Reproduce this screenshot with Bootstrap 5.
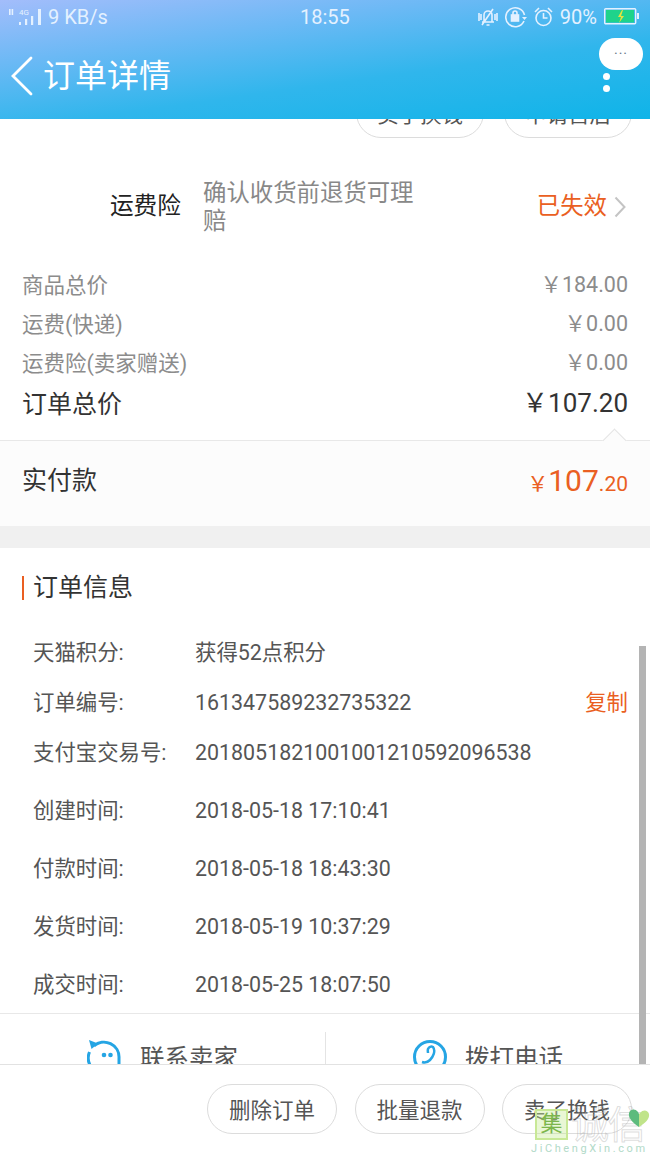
<!DOCTYPE html>
<html lang="zh-CN">

<head>
    <meta charset="UTF-8">
    <meta name="viewport" content="width=device-width, initial-scale=1.0">
    <title>订单详情</title>
    <link href="https://cdn.jsdelivr.net/npm/bootstrap@5.3.0/dist/css/bootstrap.min.css" rel="stylesheet">
    <style>
        html, body { height: 1155px; overflow: hidden; }
        body { font-family: Roboto, "Noto Sans CJK SC", sans-serif; color: #444; background: #fff; }
        .app-shell { height: 1155px; position: relative; overflow: hidden; }
        .top-area { height: 119px; flex: none; background: linear-gradient(172deg, #a3bdfb 0%, #6cb9f5 30%, #30b6ec 62%, #0fb4e8 100%); color: #fff; position: relative; }
        .status-bar { height: 33px; font-size: 20px; color: #e4f1ff; padding: 0 10px 0 8px; }
        .status-left { width: 292px; gap: 6px; }
        .status-clock { width: 100px; }
        .status-right { flex: 1; gap: 7px; }
        .header-title { margin-top: 15px; height: 56px; padding-left: 10px; font-size: 32px; line-height: 56px; gap: 10px; }
        .float-ball { position: absolute; right: 7px; top: 38px; width: 44px; height: 32px; border-radius: 16px; background: #fff; color: #667788; font-size: 14px; line-height: 32px; letter-spacing: 1px; text-align: center; }
        .float-dot { position: absolute; right: 40px; width: 7px; height: 7px; border-radius: 50%; background: #fff; }
        .main-area { flex: 1; overflow: hidden; position: relative; min-height: 0; }
        .clip-btns { height: 19px; overflow: hidden; padding-right: 18px; gap: 20px; }
        .pill-btn { flex: none; width: 130px; height: 50px; border: 1px solid #dcdcdc; border-radius: 25px; background: #fff; color: #555; font-size: 21.5px; line-height: 44px; padding: 4px 0 0; text-align: center; }
        .clip-btns .pill-btn { width: 128px; }
        .ins-row { height: 129px; padding: 9px 24px 0 0; }
        .ins-name { width: 203px; padding-right: 22px; text-align: right; font-size: 23.7px; color: #222; }
        .ins-desc { width: 220px; font-size: 23.4px; line-height: 28px; color: #888; }
        .ins-state { font-size: 23.4px; color: #ea5f22; gap: 7px; }
        .price-rows { padding: 0 22px; }
        .price-row { height: 39px; font-size: 21.5px; color: #8c8c8c; }
        .price-num { margin-top: -3px; }
        .price-total { height: 40px; padding-top: 2px; font-size: 25px; color: #333; }
        .price-total .price-num { font-size: 26px; }
        .paid-box { position: relative; height: 86px; margin-top: 16px; padding: 0 22px 6px; background: #fcfcfc; border-top: 1px solid #e8e8e8; font-size: 25px; color: #333; }
        .paid-box::before { content: ""; position: absolute; right: 27px; top: -9px; width: 17px; height: 17px; background: #fcfcfc; border-top: 1px solid #e4e4e4; border-left: 1px solid #e4e4e4; transform: rotate(45deg); }
        .paid-num { color: #ea5f22; font-size: 21px; }
        .paid-num b { font-size: 30px; font-weight: 400; }
        .gap-band { height: 22px; background: #f0f0f0; }
        .info-title { height: 80px; padding-left: 22px; font-size: 25px; color: #333; }
        .info-title span { display: block; border-left: 2px solid #ea5f22; padding-left: 9px; line-height: 24px; }
        .info-list { height: 385px; padding: 0 22px 0 33px; font-size: 21.4px; color: #555; }
        .info-row { display: flex; align-items: center; height: 50px; }
        .info-row.tall { height: 58.25px; }
        .info-row.first-tall { margin-top: 3.5px; }
        .info-label { width: 162px; flex: none; }
        .info-copy { margin-left: auto; color: #ea5f22; }
        .contact-row { height: 60px; border-top: 1px solid #e8e8e8; padding-top: 18px; }
        .contact-cell { width: 50%; height: 60px; padding-left: 87px; gap: 19px; font-size: 24.5px; color: #555; align-items: flex-start; }
        .contact-cell + .contact-cell { border-left: 1px solid #e4e4e4; gap: 18px; }
        .contact-cell svg { flex: none; margin-top: 8px; }
        .contact-text { line-height: 36px; margin-top: 9px; }
        .bottom-bar { height: 91px; flex: none; border-top: 1px solid #e2e2e2; background: #fff; padding: 19px 18px 0 0; gap: 17.5px; position: relative; }
        .scroll-thumb { position: absolute; right: 4px; top: 527px; width: 7px; height: 418px; background: #b4b4b4; }
        .site-mark { position: absolute; left: 531px; top: 1106px; width: 119px; height: 49px; pointer-events: none; overflow: hidden; }
        .mark-box { position: absolute; left: 4px; top: 3px; width: 33px; height: 31px; background: rgba(200, 235, 150, .4); border: 2px solid #c8e896; color: #7cb64c; font-size: 22px; line-height: 26px; text-align: center; }
        .mark-name { position: absolute; left: 40px; top: 0; color: transparent; -webkit-text-stroke: 1px rgba(170, 170, 170, .4); font-size: 38px; line-height: 38px; letter-spacing: -1px; white-space: nowrap; }
        .mark-heart { position: absolute; left: 97px; top: 2px; }
        .mark-url { position: absolute; left: 0; top: 36px; color: #b2dac8; font-size: 11px; line-height: 14px; letter-spacing: 2.600px; white-space: nowrap; }
    </style>
</head>

<body>
    <div class="app-shell d-flex flex-column">
        <div class="top-area">
            <div class="status-bar d-flex align-items-center">
                <div class="status-left d-flex align-items-center">
                    <svg width="34" height="20" viewBox="0 0 34 20" fill="#e4f1ff">
                        <rect x="1" y="2" width="1.600" height="6"/><rect x="3.600" y="2" width="1.600" height="6"/>
                        <text x="11" y="8" font-size="8" font-family="Roboto">4G</text>
                        <rect x="11" y="15" width="2" height="3"/><rect x="17" y="12" width="2.200" height="6"/><rect x="23" y="9" width="2.200" height="9"/><rect x="30" y="2" width="3" height="16"/>
                    </svg>
                    <span>9 KB/s</span>
                </div>
                <div class="status-clock">18:55</div>
                <div class="status-right d-flex align-items-center justify-content-end">
                    <svg width="20" height="22" viewBox="0 0 20 22" fill="none" stroke="#e4f1ff" stroke-width="1.600">
                        <path d="M6 16V9a4 4 0 0 1 8 0v7zM4 16h12M8.500 19h3M4 19 15 3M1 7v8M19 7v8M3 8v6M17 8v6"/>
                    </svg>
                    <svg width="22" height="22" viewBox="0 0 22 22" fill="none" stroke="#e4f1ff" stroke-width="1.600">
                        <path d="M19 15a9.500 9.500 0 1 1 .5-6"/><path d="M17 11h5l-2.500 3z" fill="#e4f1ff" stroke="none"/><rect x="6.500" y="9" width="7" height="6" fill="#e4f1ff"/><path d="M8 9V7a2 2 0 0 1 4 0v2"/>
                    </svg>
                    <svg width="19" height="22" viewBox="0 0 19 22" fill="none" stroke="#e4f1ff" stroke-width="1.600">
                        <circle cx="9.500" cy="12" r="7.500"/><path d="M9.500 7v5h4M1 6l4-4M18 6l-4-4"/>
                    </svg>
                    <span>90%</span>
                    <svg width="36" height="18" viewBox="0 0 36 18">
                        <rect x=".7" y=".7" width="31" height="15" rx="1" fill="none" stroke="#e4f1ff" stroke-width="1.400"/>
                        <rect x="2" y="2" width="28" height="12.500" fill="#1fd38b"/>
                        <rect x="33" y="5" width="2" height="6" fill="#e4f1ff"/>
                        <path d="M18 2l-4 7h3l-2 6 5-7h-3l2-6z" fill="#e6e23c"/>
                    </svg>
                </div>
            </div>
            <div class="header-title d-flex align-items-center">
                <svg width="23" height="40" viewBox="0 0 23 40" fill="none" stroke="#fff" stroke-width="2.800" stroke-linecap="round">
                    <path d="M21 2 3 20 21 38"/>
                </svg>
                <span>订单详情</span>
            </div>
            <div class="float-ball">···</div>
            <div class="float-dot" style="top: 73px"></div>
            <div class="float-dot" style="top: 85px"></div>
        </div>

        <div class="main-area">
            <div class="clip-btns d-flex justify-content-end align-items-end">
                <button class="pill-btn" type="button">卖了换钱</button>
                <button class="pill-btn" type="button">申请售后</button>
            </div>

            <div class="ins-row d-flex align-items-center">
                <div class="ins-name">运费险</div>
                <div class="ins-desc">确认收货前退货可理赔</div>
                <div class="ins-state ms-auto d-flex align-items-center">
                    <span>已失效</span>
                    <svg width="12" height="22" viewBox="0 0 12 22" fill="none" stroke="#c4c4c4" stroke-width="2">
                        <path d="M1.500 1.500 10.500 11 1.500 20.500"/>
                    </svg>
                </div>
            </div>

            <div class="price-rows">
                <div class="price-row d-flex justify-content-between align-items-center"><span>商品总价</span><span class="price-num">￥184.00</span></div>
                <div class="price-row d-flex justify-content-between align-items-center"><span>运费(快递)</span><span class="price-num">￥0.00</span></div>
                <div class="price-row d-flex justify-content-between align-items-center"><span>运费险(卖家赠送)</span><span class="price-num">￥0.00</span></div>
                <div class="price-total d-flex justify-content-between align-items-center"><span>订单总价</span><span class="price-num">￥107.20</span></div>
            </div>

            <div class="paid-box d-flex justify-content-between align-items-center">
                <span>实付款</span>
                <span class="paid-num">￥<b>107</b>.20</span>
            </div>
            <div class="gap-band"></div>

            <div class="info-title d-flex align-items-center"><span>订单信息</span></div>
            <div class="info-list">
                <div class="info-row"><span class="info-label">天猫积分:</span><span>获得52点积分</span></div>
                <div class="info-row"><span class="info-label">订单编号:</span><span>161347589232735322</span><span class="info-copy">复制</span></div>
                <div class="info-row"><span class="info-label">支付宝交易号:</span><span>2018051821001001210592096538</span></div>
                <div class="info-row tall first-tall"><span class="info-label">创建时间:</span><span>2018-05-18 17:10:41</span></div>
                <div class="info-row tall"><span class="info-label">付款时间:</span><span>2018-05-18 18:43:30</span></div>
                <div class="info-row tall"><span class="info-label">发货时间:</span><span>2018-05-19 10:37:29</span></div>
                <div class="info-row tall"><span class="info-label">成交时间:</span><span>2018-05-25 18:07:50</span></div>
            </div>

            <div class="contact-row d-flex">
                <div class="contact-cell d-flex">
                    <svg width="34" height="34" viewBox="0 0 34 34" fill="none" stroke="#25a5e4" stroke-width="3">
                        <path d="M3 25a15 15 0 0 1-.5-13M7 6a15 15 0 0 1 25 12v7"/>
                        <path d="M2 0l9 3.500-6.500 5.500z" fill="#25a5e4" stroke="none"/>
                        <circle cx="17" cy="15" r="2.300" fill="#25a5e4" stroke="none"/><circle cx="23.500" cy="15" r="2.300" fill="#25a5e4" stroke="none"/>
                    </svg>
                    <span class="contact-text">联系卖家</span>
                </div>
                <div class="contact-cell d-flex">
                    <svg width="34" height="34" viewBox="0 0 34 34" fill="none" stroke="#25a5e4" stroke-width="3">
                        <circle cx="17" cy="17" r="15.500"/>
                        <path d="M9 22c3 1 6 0 8-2 3-3 6-9 3-13-2-1-4 0-5 2-.5 1.500 0 3 0 4" stroke-width="2.500"/>
                    </svg>
                    <span class="contact-text">拨打电话</span>
                </div>
            </div>
            <div class="scroll-thumb"></div>
        </div>

        <div class="bottom-bar d-flex justify-content-end">
            <button class="pill-btn" type="button">删除订单</button>
            <button class="pill-btn" type="button">批量退款</button>
            <button class="pill-btn" type="button">卖了换钱</button>
        </div>

        <div class="site-mark">
            <div class="mark-box">集</div>
            <div class="mark-name">诚信</div>
            <svg class="mark-heart" width="22" height="20" viewBox="0 0 22 20">
                <path d="M11 19C4 14 0 10 1 5c1-4 6-5 9-1l1 2z" fill="#5dbb7d"/>
                <path d="M11 19c6-4 11-8 10-13-1-4-6-5-9-1l-1 1z" fill="#c0e48a"/>
            </svg>
            <div class="mark-url">JiChengXin.com</div>
        </div>
    </div>
    <script src="https://cdn.jsdelivr.net/npm/bootstrap@5.3.0/dist/js/bootstrap.bundle.min.js"></script>
</body>

</html>
